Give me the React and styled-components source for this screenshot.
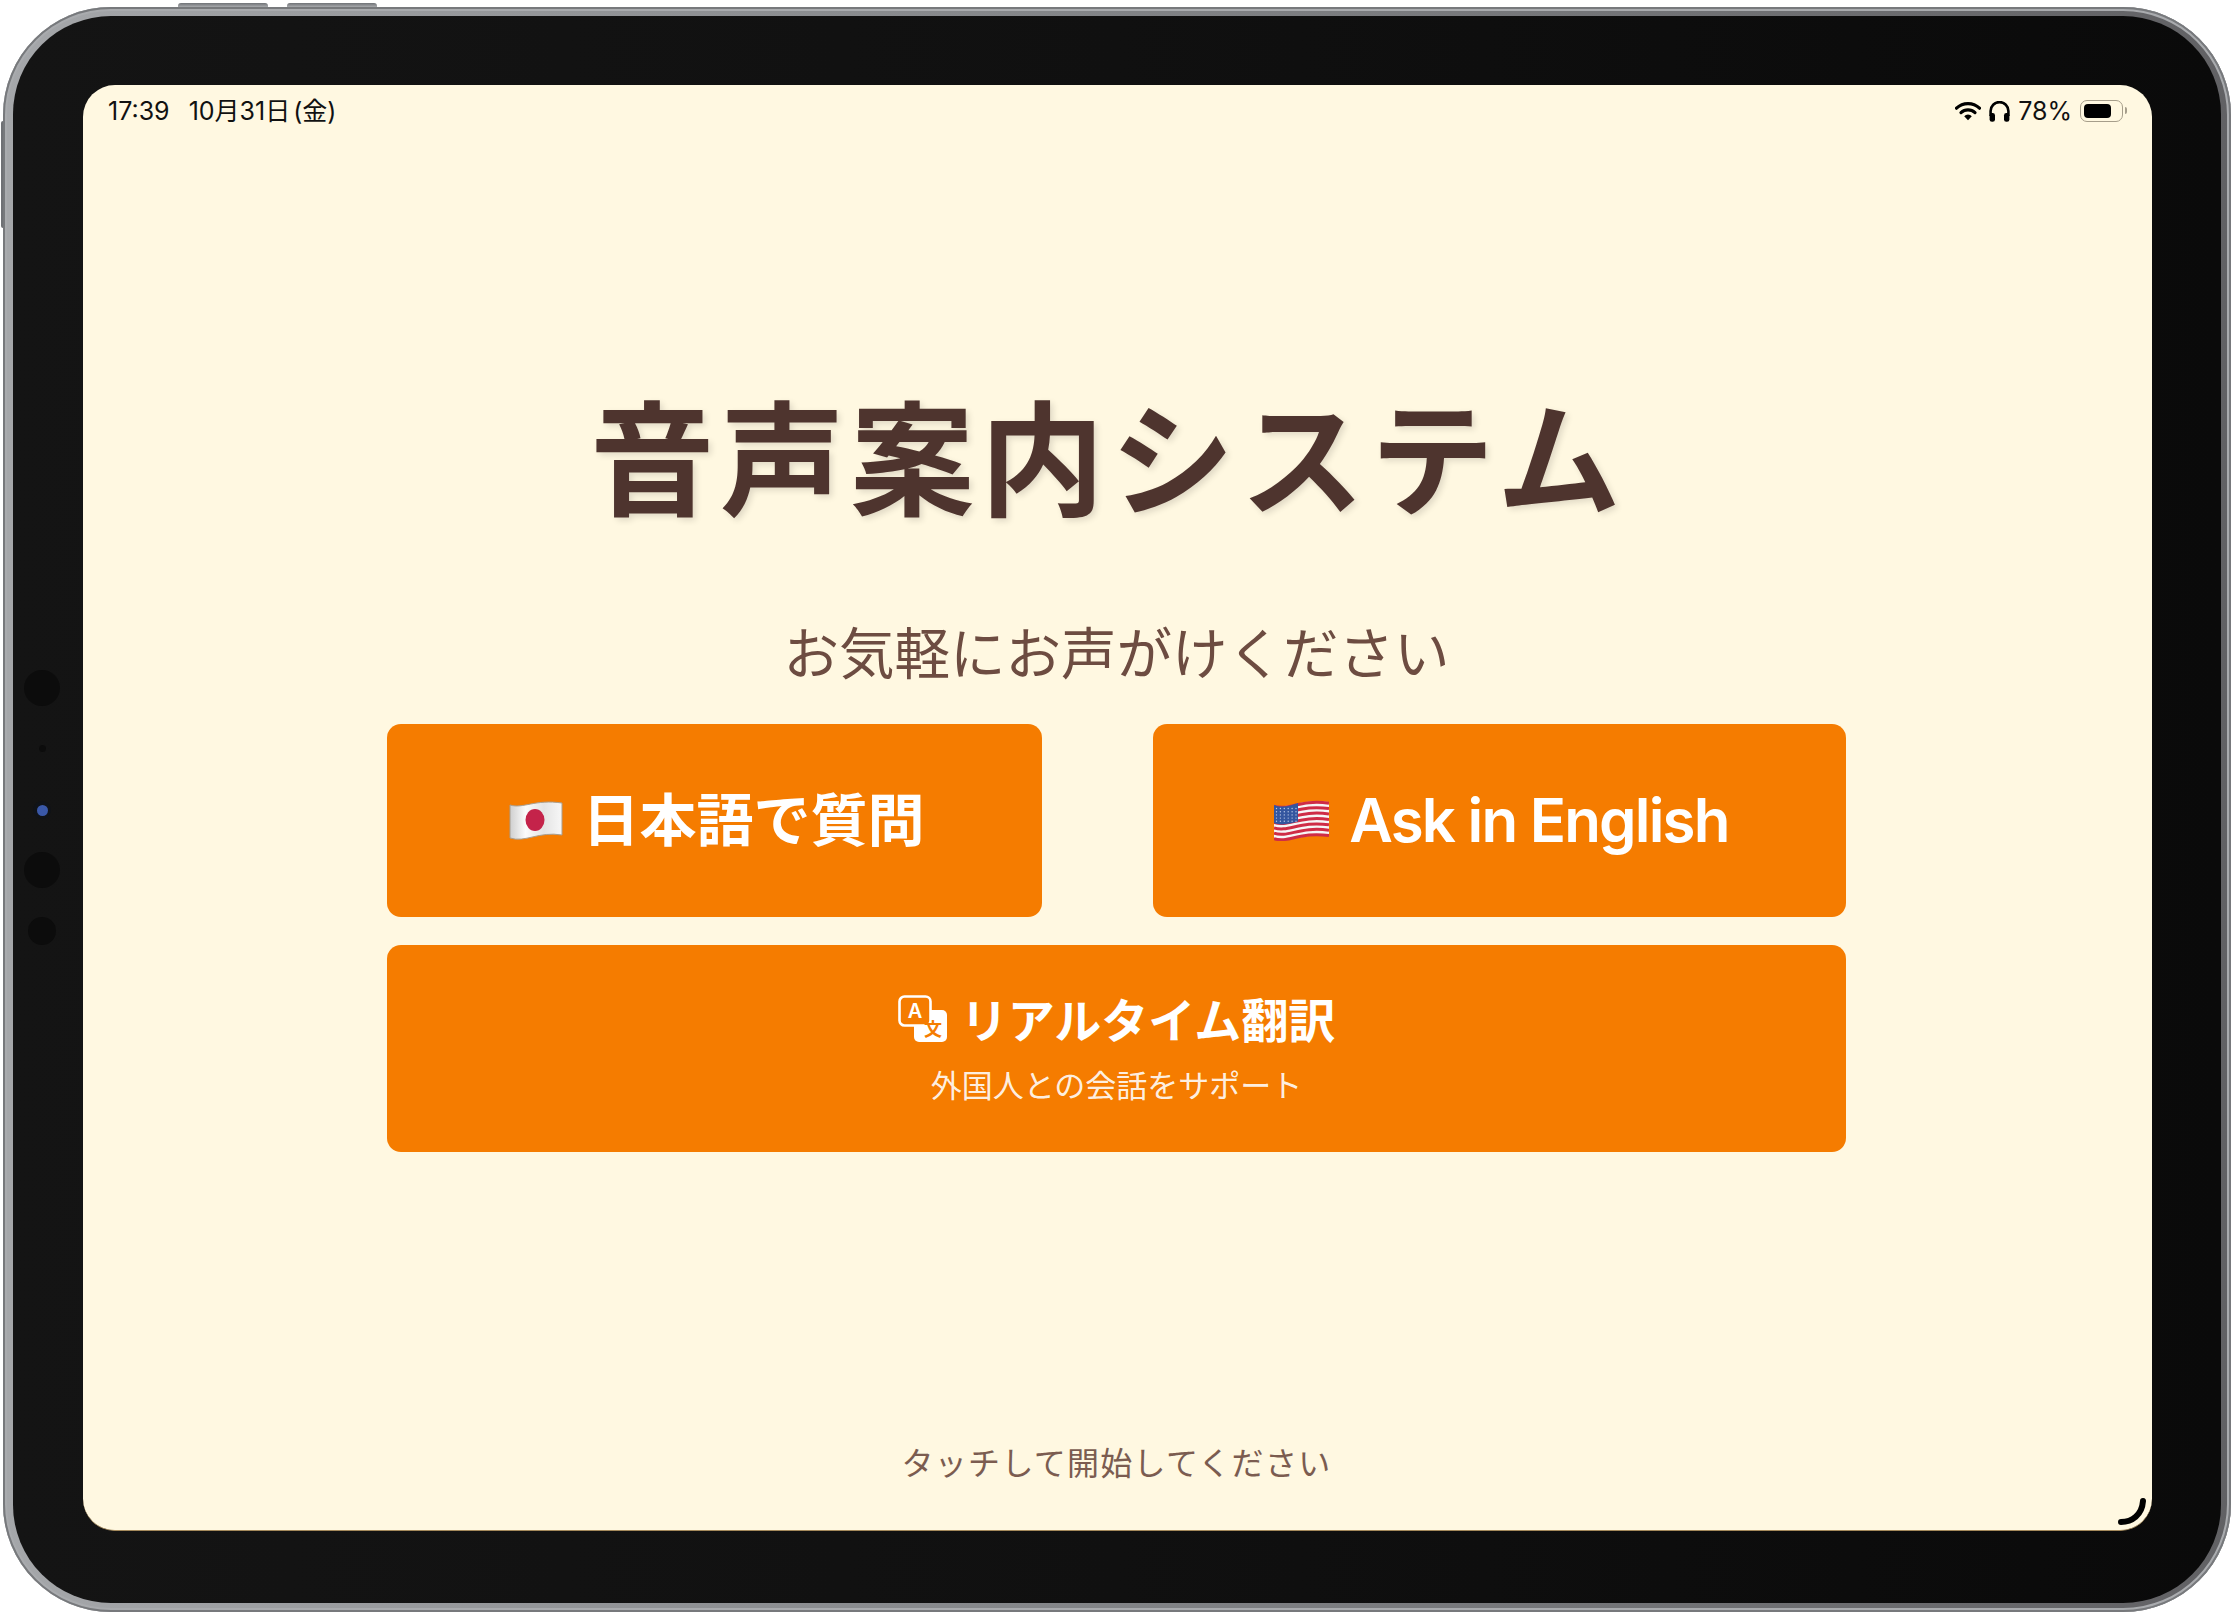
import React from 'react'
import styled, { createGlobalStyle } from 'styled-components'

const GlobalStyle = createGlobalStyle`
  html, body {
    margin: 0;
    background: #fff;
  }
  body {
    font-family: Inter, "Noto Sans CJK JP", sans-serif;
  }
`

const Device = styled.div`
  position: relative;
  width: 2228px;
  height: 1605px;
  margin: 7px 0 0 3px;
  padding: 9px 10px 9px 10px;
  box-sizing: border-box;
  display: flex;
  border-radius: 108px;
  background: linear-gradient(90deg, #a5a7aa 0%, #85878a 45%, #616164 100%);
  box-shadow: inset 0 0 0 2px #77797c, inset 0 0 0 4px #a9abae;
`

const TopKey = styled.span`
  position: absolute;
  top: -4px;
  left: ${p => p.$left}px;
  width: 90px;
  height: 4px;
  border-radius: 3px 3px 0 0;
  background: linear-gradient(180deg, #6f7276, #a7a9ac);
`

const SideKey = styled.span`
  position: absolute;
  top: 114px;
  left: -2px;
  width: 2px;
  height: 107px;
  border-radius: 2px 0 0 2px;
  background: #6f7175;
`

const Bezel = styled.div`
  flex: 1;
  display: flex;
  padding: 69px 69px 72px 70px;
  border-radius: 98px;
  background: linear-gradient(90deg, #141414 0%, #101010 50%, #0a0a0a 100%);
`

const Sensors = styled.div`
  position: absolute;
  left: 21px;
  top: 663px;
  width: 36px;
  height: 290px;
`

const Sensor = styled.span`
  position: absolute;
  left: ${p => 18 - p.$size / 2}px;
  top: ${p => p.$y - p.$size / 2}px;
  width: ${p => p.$size}px;
  height: ${p => p.$size}px;
  border-radius: 50%;
  background: ${p => p.$color || '#0c0c0c'};
`

const Screen = styled.div`
  position: relative;
  flex: 1;
  display: flex;
  flex-direction: column;
  overflow: hidden;
  border-radius: 32px;
  border-bottom: 1px solid #a58a5c;
  background: #fff8e1;
`

const StatusBar = styled.div`
  display: flex;
  justify-content: space-between;
  align-items: center;
  height: 52px;
  padding: 0 25px;
  color: #111;
  font-family: Inter, "Noto Sans CJK JP", sans-serif;
  font-size: 25px;
  line-height: 1;
`

const StatusLeft = styled.div`
  display: flex;
  gap: 19px;
  word-spacing: -4px;
`

const StatusRight = styled.div`
  display: flex;
  align-items: center;
  gap: 8px;
`

const Battery = styled.span`
  position: relative;
  display: block;
  width: 43px;
  height: 22px;
  margin-right: 4px;
  padding: 3px;
  box-sizing: border-box;
  border: 1.5px solid #a69e8b;
  border-radius: 7px;

  &::before {
    content: '';
    display: block;
    width: 78%;
    height: 100%;
    border-radius: 4px;
    background: #000;
  }

  &::after {
    content: '';
    position: absolute;
    right: -5px;
    top: 6px;
    width: 2px;
    height: 7px;
    border-radius: 0 2px 2px 0;
    background: #a69e8b;
  }
`

const Main = styled.main`
  flex: 1;
  display: flex;
  flex-direction: column;
  align-items: center;
  padding: 0 306px 0 304px;
`

const Title = styled.h1`
  margin: 253px 0 0;
  padding-right: 16px;
  color: #4e342e;
  font-family: "Noto Sans CJK JP", sans-serif;
  font-size: 124px;
  font-weight: 700;
  line-height: 1;
  letter-spacing: 6px;
  text-shadow: 3px 3px 6px rgba(0, 0, 0, 0.12);
`

const Subtitle = styled.p`
  margin: 109px 0 0;
  color: #6d4c41;
  font-family: "Noto Sans CJK JP", sans-serif;
  font-size: 55.5px;
  font-weight: 400;
  line-height: 1;
`

const ButtonGrid = styled.div`
  display: grid;
  grid-template-columns: 655px 693px;
  justify-content: space-between;
  row-gap: 28px;
  width: 100%;
  margin-top: 45px;
`

const ActionButton = styled.button`
  display: flex;
  flex-direction: ${p => (p.$wide ? 'column' : 'row')};
  justify-content: center;
  align-items: center;
  grid-column: ${p => (p.$wide ? '1 / -1' : 'auto')};
  gap: ${p => (p.$wide ? '26px' : '20px')};
  height: ${p => (p.$wide ? '207px' : '193px')};
  padding: ${p => (p.$wide ? '0 0 4px' : '0 0 0 4px')};
  border: 0;
  border-radius: 14px;
  background: #f57c00;
  color: #fff;
  cursor: pointer;
`

const ButtonLabel = styled.span`
  padding-bottom: ${p => (p.$latin ? '0' : '7px')};
  font-family: ${p => (p.$latin ? 'Inter' : '"Noto Sans CJK JP"')}, "Noto Sans CJK JP", sans-serif;
  font-size: ${p => (p.$latin ? '60px' : '57px')};
  font-weight: 600;
  letter-spacing: ${p => (p.$latin ? '-1.8px' : '0')};
  line-height: 1;
`

const TranslateHead = styled.span`
  display: flex;
  align-items: center;
  gap: 14px;
  font-family: "Noto Sans CJK JP", sans-serif;
  font-size: 47px;
  font-weight: 600;
  line-height: 1;
`

const TranslateSub = styled.span`
  color: rgba(255, 255, 255, 0.9);
  font-family: "Noto Sans CJK JP", sans-serif;
  font-size: 31px;
  font-weight: 400;
  line-height: 1;
`

const Footer = styled.p`
  margin: auto 0 53px;
  color: #6d4c41;
  font-family: "Noto Sans CJK JP", sans-serif;
  font-size: 32px;
  font-weight: 400;
  line-height: 1;
  letter-spacing: 1.3px;
  text-align: center;
  opacity: 0.9;
`

const CornerMark = styled.svg`
  position: absolute;
  right: 4px;
  bottom: 4px;
`

const WifiIcon = () => (
  <svg width="26" height="20" viewBox="0 0 26 20">
    <path d="M1.5 7.2a16.5 16.5 0 0 1 23 0" fill="none" stroke="#000" strokeWidth="3.2" strokeLinecap="round" />
    <path d="M6 11.6a10.2 10.2 0 0 1 14 0" fill="none" stroke="#000" strokeWidth="3.2" strokeLinecap="round" />
    <path d="M9.2 15.2a5 5 0 0 1 7.6 0L13 19.2z" fill="#000" />
  </svg>
)

const HeadphonesIcon = () => (
  <svg width="21" height="21" viewBox="0 0 21 21">
    <path d="M1.6 15V10a8.9 8.9 0 0 1 17.8 0v5" fill="none" stroke="#000" strokeWidth="2.6" />
    <rect x="0.6" y="12" width="5.4" height="8.8" rx="2.4" fill="#000" />
    <rect x="15" y="12" width="5.4" height="8.8" rx="2.4" fill="#000" />
  </svg>
)

const JapanFlag = () => (
  <svg width="54" height="40" viewBox="0 0 54 40">
    <defs>
      <linearGradient id="jpCloth" x1="0" x2="1" y1="0" y2="0">
        <stop offset="0" stopColor="#cfcfcf" />
        <stop offset="0.3" stopColor="#fbfbfb" />
        <stop offset="0.65" stopColor="#e4e4e4" />
        <stop offset="1" stopColor="#f7f7f7" />
      </linearGradient>
    </defs>
    <path d="M1 5C14 9 26 -1 53 3V35C30 31 16 43 1 38Z" fill="url(#jpCloth)" stroke="#a89e8f" strokeWidth="1" />
    <ellipse cx="26" cy="20" rx="9.5" ry="11" fill="#c4234a" />
  </svg>
)

const usStripes = Array.from({ length: 7 }, (_, i) => i * 5.4)
const usStarRows = [0, 1, 2, 3, 4]
const usStarCols = [0, 1, 2, 3, 4, 5]

const UsFlag = () => (
  <svg width="55" height="42" viewBox="0 0 55 42">
    <path d="M0 6C14 11 26 -1 55 3V37C30 33 16 45 0 39Z" fill="#f6f6f6" />
    {usStripes.map(y => (
      <path
        key={y}
        d={`M0 ${7.2 + y}C14 ${12 + y} 26 ${0 + y} 55 ${4.2 + y}`}
        fill="none"
        stroke="#cf2c46"
        strokeWidth="3"
      />
    ))}
    <path d="M0 6C8 9 16 7 24 4V22.5C16 24.5 8 27 0 24Z" fill="#34569f" />
    {usStarRows.map(r =>
      usStarCols.map(c => (
        <circle key={`${r}-${c}`} cx={2.5 + c * 3.9} cy={9.5 + r * 3.2} r="0.7" fill="#b8c6e4" />
      ))
    )}
  </svg>
)

const TranslateIcon = () => (
  <svg width="49" height="49" viewBox="0 -2 49 49">
    <rect x="16" y="15" width="33" height="32" rx="5" fill="#fff" />
    <rect x="1.5" y="1.5" width="31" height="29" rx="5" fill="#f57c00" stroke="#fff" strokeWidth="2.6" />
    <text x="17" y="23" textAnchor="middle" fill="#fff" fontFamily="Inter" fontSize="20" fontWeight="600">A</text>
    <text x="35" y="41" textAnchor="middle" fill="#f57c00" fontFamily="Noto Sans CJK JP" fontSize="18" fontWeight="700">文</text>
  </svg>
)

export default function App() {
  return (
    <>
      <GlobalStyle />
      <Device>
        <TopKey $left={175} />
        <TopKey $left={284} />
        <SideKey />
        <Sensors>
          <Sensor $y={18} $size={36} />
          <Sensor $y={78} $size={7} />
          <Sensor $y={140} $size={18} $color="#101318" />
          <Sensor $y={140} $size={11} $color="#3a58a8" />
          <Sensor $y={200} $size={36} />
          <Sensor $y={261} $size={28} />
        </Sensors>
        <Bezel>
          <Screen>
            <StatusBar>
              <StatusLeft>
                <span>17:39</span>
                <span>10月31日 (金)</span>
              </StatusLeft>
              <StatusRight>
                <WifiIcon />
                <HeadphonesIcon />
                <span>78%</span>
                <Battery />
              </StatusRight>
            </StatusBar>
            <Main>
              <Title>音声案内システム</Title>
              <Subtitle>お気軽にお声がけください</Subtitle>
              <ButtonGrid>
                <ActionButton>
                  <JapanFlag />
                  <ButtonLabel>日本語で質問</ButtonLabel>
                </ActionButton>
                <ActionButton>
                  <UsFlag />
                  <ButtonLabel $latin>Ask in English</ButtonLabel>
                </ActionButton>
                <ActionButton $wide>
                  <TranslateHead>
                    <TranslateIcon />
                    リアルタイム翻訳
                  </TranslateHead>
                  <TranslateSub>外国人との会話をサポート</TranslateSub>
                </ActionButton>
              </ButtonGrid>
              <Footer>タッチして開始してください</Footer>
            </Main>
            <CornerMark width="30" height="30" viewBox="0 0 30 30">
              <path d="M3 26C14 26 24 19 25 5" fill="none" stroke="#000" strokeWidth="6" strokeLinecap="round" />
            </CornerMark>
          </Screen>
        </Bezel>
      </Device>
    </>
  )
}
